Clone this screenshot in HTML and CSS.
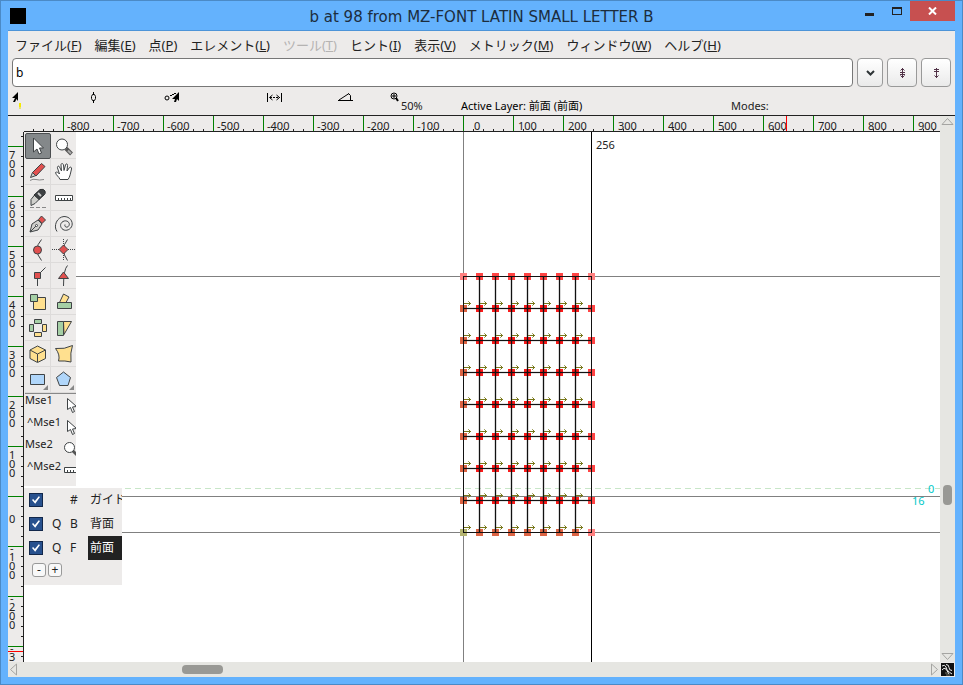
FILE: index.html
```html
<!DOCTYPE html>
<html lang="ja">

<head>
    <meta charset="utf-8">
    <title>b at 98 from MZ-FONT LATIN SMALL LETTER B</title>
    <link rel="stylesheet" href="styles.css">
</head>

<body>
    <header class="titlebar">
        <span class="app-icon"></span>
        <h1>b at 98 from MZ-FONT LATIN SMALL LETTER B</h1>
        <div class="window-buttons">
            <button class="win-btn" aria-label="Minimize"><svg width="10" height="10"><path d="M0 7h9v3h-9z" fill="#222"/></svg></button>
            <button class="win-btn" aria-label="Maximize"><svg width="10" height="8"><path d="M0 0h10v8H0zM1 2v5h8V2z" fill="#222" fill-rule="evenodd"/></svg></button>
            <button class="win-btn close" aria-label="Close"><svg width="9" height="8"><path d="M1 0.5l7 7M8 0.5l-7 7" stroke="#fff" stroke-width="2"/></svg></button>
        </div>
    </header>

    <main class="window">
        <nav class="menubar">
            <button>ファイル(<u>F</u>)</button>
            <button>編集(<u>E</u>)</button>
            <button>点(<u>P</u>)</button>
            <button>エレメント(<u>L</u>)</button>
            <button disabled>ツール(<u>T</u>)</button>
            <button>ヒント(<u>I</u>)</button>
            <button>表示(<u>V</u>)</button>
            <button>メトリック(<u>M</u>)</button>
            <button>ウィンドウ(<u>W</u>)</button>
            <button>ヘルプ(<u>H</u>)</button>
        </nav>

        <div class="word-row">
            <input type="text" class="word" value="b" aria-label="Glyph">
            <button class="word-btn drop" aria-label="History"><svg width="9" height="6"><path d="M1 1l3.5 3.5L8 1" fill="none" stroke="#2e3436" stroke-width="2"/></svg></button>
            <button class="word-btn" aria-label="Previous"><svg width="7" height="10"><path d="M3.5 0v10M1.5 2.5l2-2 2 2M1 4.5h5M1 6.5h5M1.5 7.5l2 2 2-2" fill="none" stroke="#513247"/></svg></button>
            <button class="word-btn" aria-label="Next"><svg width="7" height="10"><path d="M3.5 0v10M1 1.5h5M1 3.5h5M1.5 7.5l2 2 2-2" fill="none" stroke="#513247"/></svg></button>
        </div>

        <div class="infobar">
            <span class="info"><svg width="10" height="18"><path d="M6 0v9L4.500 7 3 10H1l2-4H0z" fill="#000"/><path d="M8 11v4" stroke="#f5ea00" stroke-width="2"/><path d="M7 16h2" stroke="#e5d800"/></svg></span>
            <span class="info"><svg width="7" height="11"><path d="M3.5 0v3M3.5 8v3M2.5 2.500h2l1 2v2l-1 2h-2l-1-2v-2z" fill="none" stroke="#000"/></svg></span>
            <span class="info"><svg width="17" height="11"><circle cx="3" cy="6" r="2" fill="none" stroke="#000"/><path d="M6 3.500h2M8 2.500h2M10 1.500h2" stroke="#000"/><path d="M15 0v9l-2-2-1 3h-2l1-3H8z" fill="#000"/></svg></span>
            <span class="info"><svg width="16" height="11"><path d="M.5 1v9M14.500 1v9" stroke="#000"/><path d="M3 5.500h10" stroke="#000" stroke-dasharray="2 1"/><path d="M5.500 3l-3 2.500 3 2.500M9.500 3l3 2.500-3 2.500" fill="none" stroke="#000"/></svg></span>
            <span class="info"><svg width="16" height="11"><path d="M0 8.500h15M1 8L11 1.500M10.500 1.500l2 2v5" fill="none" stroke="#000"/></svg></span>
            <span class="info"><svg width="10" height="11"><circle cx="4" cy="4" r="3" fill="none" stroke="#000"/><path d="M2 4h4M4 2v4" stroke="#000"/><path d="M6 6l2 3" stroke="#000" stroke-width="2"/></svg></span>
            <span class="info-text">50%</span>
            <span class="info-text active-layer">Active Layer: 前面 (前面)</span>
            <span class="info-text">Modes:</span>
        </div>

        <section class="editor">
            <svg class="ruler-top" id="rulerTop"></svg>
            <svg class="ruler-left" id="rulerLeft"></svg>
            <div class="view">
                <svg class="glyph" id="glyph"></svg>

                <aside class="palette tools">
                    <div class="tool-grid">
                        <button class="tool selected" aria-label="Pointer"><svg viewBox="0 0 26 26"><path class="white" d="M8.500 5v14l3.500-3 2 5 2.500-1-2-5h4z"/></svg></button>
                        <button class="tool" aria-label="Magnify"><svg viewBox="0 0 26 26"><path d="M15 15.500l5.500 5.500" stroke="#555" stroke-width="4"/><path d="M17 17.500l3 3" stroke="#aaa" stroke-width="2"/><circle class="white" cx="11" cy="11.500" r="5.500"/></svg></button>
                        <button class="tool" aria-label="Freehand"><svg viewBox="0 0 26 26"><path class="gray" d="M5.500 18.500l2-5 3.500 3z"/><path class="red" d="M7.500 13.500l9-9 3.500 3-9 9.500z"/><path class="thin" d="M5 21.500q3-2 6-1t8 0"/></svg></button>
                        <button class="tool" aria-label="Hand"><svg viewBox="0 0 26 26"><path class="white" d="M9 20.500c-1-3-4-4-4.500-7 1-1 3 0 4 1.500L6.500 9c-.5-2 1.500-2.500 2-1l2 4-.5-6c0-2 2-2 2.500 0l.5 5.500L14.500 6c.5-2 2.500-1 2 .5L16 12l2.500-3.500c1-1 2.500 0 2 1.500C19.500 14 19 18 17 20.500z"/></svg></button>
                        <button class="tool" aria-label="Knife"><svg viewBox="0 0 26 26"><path class="gray" d="M6 20.500v-6l4-5 5 4-5 5z"/><path d="M9 10l6-5.500q4-1 5 1.500T19 10l-5 4.500z" fill="#3e4143" stroke="#2e3132"/><path d="M13 8l3 3" stroke="#ccc" stroke-width="2"/><path class="thin" d="M5 22.500h16" stroke-dasharray="4 2"/></svg></button>
                        <button class="tool" aria-label="Ruler"><svg viewBox="0 0 26 26"><path class="white" d="M4.500 10.500h17v5h-17z"/><path class="line" d="M7.500 15v-2M10.500 15v-2M13.500 15v-2M16.500 15v-2M19.500 15v-2"/></svg></button>
                        <button class="tool" aria-label="Pen"><svg viewBox="0 0 26 26"><path class="gray" d="M5 21l2-8 6-4 4 4-4 6z"/><path class="line" d="M5 21l6-6"/><circle class="white" cx="11.500" cy="14.500" r="1"/><path class="red" d="M13.500 8.500L16.500 5l4 4-3.500 3.500z"/></svg></button>
                        <button class="tool" aria-label="Spiral"><svg viewBox="0 0 26 26"><path class="line" d="M6 20.500C2 15 6 6 13 5.500c6 0 9 5 8 9s-6 6-9 4-3.500-6 0-8 7.500 1 6 4-5 1.500-4-1"/></svg></button>
                        <button class="tool" aria-label="Curve point"><svg viewBox="0 0 26 26"><path class="line" d="M16.500 2.500q-9 10 0 21"/><circle class="red" cx="12.500" cy="13" r="4"/></svg></button>
                        <button class="tool" aria-label="HV curve point"><svg viewBox="0 0 26 26"><path class="line" d="M1 12.500h24M12.500 2v21" stroke-dasharray="1 1"/><path class="line" d="M16.500 2.500q-8 10 0 21"/><path class="red" d="M12.500 8l4.500 4.500-4.500 4.500L8 12.500z"/></svg></button>
                        <button class="tool" aria-label="Corner point"><svg viewBox="0 0 26 26"><path class="line" d="M20.500 4.500l-8 8v10.500"/><path class="red" d="M9.500 9.500h6v6h-6z"/></svg></button>
                        <button class="tool" aria-label="Tangent point"><svg viewBox="0 0 26 26"><path class="line" d="M16.500 2.500q-4 4-4 20.500"/><path class="red" d="M12.500 9l5 6.500h-10z"/></svg></button>
                        <button class="tool" aria-label="Scale"><svg viewBox="0 0 26 26"><path class="yellow" d="M8.500 8.500h12v12h-12z"/><path class="green" d="M5.500 5.500h7v7h-7z"/></svg></button>
                        <button class="tool" aria-label="Rotate"><svg viewBox="0 0 26 26"><path class="yellow" d="M8.500 13.500l4-8.500 5.500 3-3 5.500z"/><path class="green" d="M6.500 13.500h14v6h-14z"/></svg></button>
                        <button class="tool" aria-label="Flip"><svg viewBox="0 0 26 26"><path class="green" d="M9.500 4.500h7v4h-7zM4.500 9.500h4v7h-4z"/><path class="yellow" d="M17.500 9.500h4v7h-4zM9.500 17.500h7v4h-7z"/></svg></button>
                        <button class="tool" aria-label="Skew"><svg viewBox="0 0 26 26"><path class="yellow" d="M12.500 6.500h8l-7.500 13z"/><path class="green" d="M6.500 6.500h6v14h-6z"/></svg></button>
                        <button class="tool" aria-label="Rotate 3D"><svg viewBox="0 0 26 26"><path class="yellow" d="M12.500 5l8 4v8.500l-8 4-7.500-4V9z"/><path class="line" d="M5 9l7.500 4 8-4M12.500 13v8"/></svg></button>
                        <button class="tool" aria-label="Perspective"><svg viewBox="0 0 26 26"><path class="yellow" d="M4.500 7.500q9 1 17-3-2.500 7-1.500 16.500-6-1.500-12.500-1 2-6-3-12.500z"/></svg></button>
                        <button class="tool" aria-label="Rectangle"><svg viewBox="0 0 26 26"><path class="blue" d="M5.500 7.500h14v10h-14z"/><path d="M23 18v5h-5z" fill="#888"/></svg></button>
                        <button class="tool" aria-label="Polygon"><svg viewBox="0 0 26 26"><path class="blue" d="M12.500 5l7 5.500-2.500 8H8.500l-3-8z"/><path d="M23 18v5h-5z" fill="#888"/></svg></button>
                    </div>
                    <ul class="mouse">
                        <li><span>Mse1</span><svg viewBox="0 0 12 16"><path class="white" d="M3.500 1.500v11l3-2 2 5 2-1-2-4.500 4-.5z"/></svg></li>
                        <li><span class="ctrl">^Mse1</span><svg viewBox="0 0 12 16"><path class="white" d="M3.500 1.500v11l3-2 2 5 2-1-2-4.500 4-.5z"/></svg></li>
                        <li><span>Mse2</span><svg viewBox="0 0 12 16"><path d="M9 10l5 5" stroke="#555" stroke-width="3"/><circle class="white" cx="5.500" cy="6.500" r="5"/></svg></li>
                        <li><span class="ctrl">^Mse2</span><svg viewBox="0 0 12 16"><path class="white" d="M.5 4.500h16v5H.5z"/><path class="line" d="M3.500 9v-2M6.500 9v-2M9.500 9v-2"/></svg></li>
                    </ul>
                </aside>

                <aside class="palette layers">
                    <div class="layer">
                        <input type="checkbox" id="layerGuide" checked>
                        <span></span><span>#</span>
                        <label for="layerGuide">ガイド</label>
                    </div>
                    <div class="layer">
                        <input type="checkbox" id="layerBack" checked>
                        <span>Q</span><span>B</span>
                        <label for="layerBack">背面</label>
                    </div>
                    <div class="layer current">
                        <input type="checkbox" id="layerFore" checked>
                        <span>Q</span><span>F</span>
                        <label for="layerFore">前面</label>
                    </div>
                    <div class="layer-buttons">
                        <button aria-label="Remove layer">-</button>
                        <button aria-label="Add layer">+</button>
                    </div>
                </aside>
            </div>

            <div class="scroll vertical">
                <svg width="15" height="10"><path d="M2 8.500h11L7.500 2.500z"/></svg>
                <div class="track"><span class="space-before"></span><span class="thumb"></span><span class="space-after"></span></div>
                <svg width="15" height="10"><path d="M2 1.500h11L7.500 7.500z"/></svg>
            </div>
            <div class="scroll horizontal">
                <svg width="10" height="15"><path d="M8.500 2v11L2.500 7.500z"/></svg>
                <div class="track"><span class="space-before"></span><span class="thumb"></span><span class="space-after"></span></div>
                <svg width="10" height="15"><path d="M1.500 2v11l6-5.500z"/></svg>
            </div>
            <div class="corner"><svg width="13" height="13"><path d="M1 3q3-2 4 1t2 4 4 3M5 1.500q3 0 3 3t3 3M1 7q2-3 4-1l3 5" fill="none" stroke="#eee"/><path d="M4 10h3M5 12h4" stroke="#776"/></svg></div>
        </section>
    </main>

    <script src="script.js"></script>
</body>

</html>
```

FILE: styles.css
```css
* {
    box-sizing: border-box;
}

body {
    display: flex;
    flex-direction: column;
    height: 100vh;
    margin: 0;
    padding: 0 7px 7px;
    border: 1px solid #4b8ac6;
    background-color: #64b2fd;
    font-family: "Noto Sans", "Noto Sans CJK JP", sans-serif;
    font-size: 11px;
    color: #222;
    overflow: hidden;
}

button {
    margin: 0;
    padding: 0;
    border: none;
    background: none;
    font: inherit;
    color: inherit;
}

svg {
    display: block;
}

/* title bar */
.titlebar {
    display: grid;
    grid-template-columns: 100px 1fr 100px;
    align-items: center;
    height: 29px;
    flex: none;
}

.app-icon {
    width: 16px;
    height: 16px;
    margin-left: 2px;
    background-color: #000;
}

h1 {
    margin: 0;
    padding-top: 2px;
    text-align: center;
    font-family: "DejaVu Sans", sans-serif;
    font-size: 15px;
    font-weight: normal;
    color: #1c2d3d;
    white-space: nowrap;
}

.window-buttons {
    display: flex;
    justify-content: flex-end;
    align-self: start;
}

.win-btn {
    display: flex;
    align-items: center;
    justify-content: center;
    width: 27px;
    height: 20px;
}

.win-btn.close {
    width: 45px;
    background-color: #c75050;
}

.window {
    display: flex;
    flex-direction: column;
    flex: 1;
    min-height: 0;
    border-top: 1px solid #4d94d8;
    background-color: #edebea;
}

/* menu */
.menubar {
    display: flex;
    gap: 13px;
    height: 27px;
    padding: 0 7px;
    font-size: 13px;
    line-height: 26px;
    white-space: nowrap;
}

.menubar button:disabled {
    color: #b5b3b2;
}

.word-row {
    display: flex;
    gap: 4px;
    height: 29px;
    padding: 0 4px;
}

.word {
    flex: 1;
    min-width: 0;
    padding: 0 3px;
    border: 1px solid #777;
    border-radius: 4px;
    background-color: #fff;
    font: inherit;
    font-size: 12px;
}

.word-btn {
    display: flex;
    align-items: center;
    justify-content: center;
    width: 30px;
    border: 1px solid #999;
    border-radius: 4px;
    background: linear-gradient(#fff, #eaeaea);
}

.word-btn.drop {
    width: 26px;
}

/* info line */
.infobar {
    display: grid;
    grid-template-columns: 78px 74px 103px 71px 52px 11px 60px 270px 1fr;
    height: 29px;
    padding: 5px 0 0 4px;
    border-bottom: 1px solid #222;
    white-space: nowrap;
}

.info-text {
    padding-top: 6px;
    line-height: 16px;
}

.active-layer {
    color: #000;
}

/* editor */
.editor {
    display: grid;
    grid-template-columns: 16px 1fr 15px;
    grid-template-rows: 16px 1fr 15px;
    flex: 1;
    min-height: 0;
}

.ruler-top {
    grid-area: 1 / 1 / 2 / 3;
    width: 100%;
    height: 100%;
}

.ruler-left {
    grid-area: 2 / 1 / 3 / 2;
    width: 100%;
    height: 100%;
}

.view {
    grid-area: 2 / 2 / 3 / 3;
    position: relative;
    min-height: 0;
    background-color: #fff;
    overflow: hidden;
}

.glyph {
    width: 100%;
    height: 100%;
}

.ruler-top text,
.ruler-left text,
.glyph text {
    font-size: 11px;
    fill: #222;
}

.glyph .metric {
    fill: #00c8c8;
}

/* palettes float over the glyph */
.palette {
    position: absolute;
    left: 0;
    background-color: #edebea;
    overflow: hidden;
}

.tools {
    top: 0;
    width: 52px;
    height: 354px;
    padding: 1px 0 0 1px;
}

.tool-grid {
    display: grid;
    grid-template-columns: 26px 26px;
}

.tool {
    height: 26px;
    border-right: 1px solid #dddbda;
    border-bottom: 1px solid #dddbda;
}

.tool svg {
    width: 26px;
    height: 26px;
}

.tool.selected {
    border: 1px solid #4b4e50;
    border-radius: 2px;
    background-color: #84888a;
}

.tool.selected svg {
    margin: -1px;
}

.palette path,
.palette circle {
    stroke-linejoin: round;
}

.white { fill: #fff; stroke: #3f4345; }
.gray { fill: #d0d0cc; stroke: #3f4345; }
.red { fill: #e2504f; stroke: #3f4345; }
.green { fill: #a5cfa5; stroke: #3f4345; }
.yellow { fill: #ffe08f; stroke: #3f4345; }
.blue { fill: #b0d6fa; stroke: #3f4345; }
.line { fill: none; stroke: #3f4345; }
.thin { fill: none; stroke: #888; }

.mouse {
    margin: 0;
    padding: 0;
    list-style: none;
    border-top: 1px solid #888;
}

.mouse li {
    display: flex;
    justify-content: space-between;
    height: 22px;
    line-height: 12px;
}

.mouse .ctrl {
    padding-left: 2px;
}

.mouse svg {
    flex: none;
    width: 12px;
    height: 16px;
    margin-top: 3px;
}

.layers {
    top: 356px;
    width: 98px;
    height: 97px;
    font-size: 12px;
}

.layer {
    display: grid;
    grid-template-columns: 23px 18px 18px 34px;
    align-items: center;
    height: 24px;
    padding-left: 5px;
    line-height: 24px;
    white-space: nowrap;
}

.layer label {
    padding-left: 2px;
    overflow: hidden;
}

.layer.current label {
    background-color: #222;
    color: #fff;
}

.layer input {
    display: grid;
    place-items: center;
    appearance: none;
    width: 14px;
    height: 14px;
    margin: 0;
    border: 1px solid #12274a;
    background-color: #28518e;
}

.layer input:checked::before {
    content: "";
    width: 8px;
    height: 8px;
    background-color: #fff;
    clip-path: polygon(0 50%, 14% 38%, 36% 62%, 84% 4%, 100% 14%, 40% 98%);
}

.layer-buttons {
    display: flex;
    gap: 2px;
    padding: 3px 8px;
}

.layer-buttons button {
    width: 14px;
    height: 14px;
    border: 1px solid #999;
    border-radius: 3px;
    background-color: #f8f8f8;
    line-height: 12px;
}

/* scroll bars */
.scroll {
    display: flex;
    background-color: #e6e6e2;
}

.scroll svg {
    flex: none;
    fill: none;
    stroke: #a5a5a2;
}

.scroll.vertical {
    grid-area: 1 / 3 / 3 / 4;
    flex-direction: column;
}

.scroll.horizontal {
    grid-area: 3 / 1 / 4 / 3;
}

.track {
    display: flex;
    flex: 1;
    padding: 3px 0;
}

.vertical .track {
    flex-direction: column;
    padding: 0 3px;
}

.thumb {
    flex: none;
    width: 41px;
    border-radius: 4px;
    background-color: #999995;
}

.vertical .thumb {
    width: auto;
    height: 20px;
}

.horizontal .space-before { flex: 164; }
.horizontal .space-after { flex: 707; }
.vertical .space-before { flex: 359; }
.vertical .space-after { flex: 147; }

.corner {
    grid-area: 3 / 3 / 4 / 4;
    background-color: #111;
    border: 1px solid #edebea;
}
```

FILE: script.js
```js
const SVG = 'http://www.w3.org/2000/svg';

function add(parent, tag, attrs, text) {
    const el = document.createElementNS(SVG, tag);
    for (const key in attrs) {
        el.setAttribute(key, attrs[key]);
    }
    if (text !== undefined) {
        el.textContent = text;
    }
    parent.appendChild(el);
}

function rect(parent, x, y, width, height, fill) {
    add(parent, 'rect', { x, y, width, height, fill });
}

// 50% zoom: 100 units are 50px
function drawTopRuler() {
    const ruler = document.getElementById('rulerTop');
    const width = ruler.getBoundingClientRect().width;
    const zero = 455;
    ruler.replaceChildren();
    for (let x = 25; x < width; x += 10) {
        rect(ruler, x, 13, 1, 2, '#222');
    }
    for (let unit = -800; zero + unit / 2 < width; unit += 100) {
        const x = zero + unit / 2;
        rect(ruler, x, 0, 1, 15, '#008000');
        if (x + 26 < width) {
            add(ruler, 'text', { x: x + (unit === 0 ? 11 : unit < 0 ? 4 : 5), y: 14 }, unit);
        }
    }
    rect(ruler, 778, 0, 1, 15, '#f00');
    rect(ruler, 16, 15, '100%', 1, '#222');
}

function drawLeftRuler() {
    const ruler = document.getElementById('rulerLeft');
    const height = ruler.getBoundingClientRect().height;
    const zero = 364;
    ruler.replaceChildren();
    for (let y = 4; y < height; y += 10) {
        rect(ruler, 13, y, 2, 1, '#222');
    }
    for (let unit = 700; zero - unit / 2 < height; unit -= 100) {
        const y = zero - unit / 2;
        rect(ruler, 0, y, 15, 1, '#008000');
        let base = unit === 0 ? y + 27 : y + 13;
        if (unit < 0) {
            add(ruler, 'text', { x: 2, y: y + 6 }, '-');
            base = y + 15;
        }
        for (const digit of String(Math.abs(unit))) {
            if (base < height) {
                add(ruler, 'text', { x: 1, y: base }, digit);
            }
            base += 9;
        }
    }
    rect(ruler, 0, 519, 15, 1, '#f00');
    rect(ruler, 15, 0, 1, '100%', '#222');
}

function nodeColor(col, row) {
    if (row === 0) {
        return col === 0 || col === 8 ? '#ff8080' : '#ff4444';
    }
    if (row === 8) {
        return col === 0 ? '#b4b470' : col === 8 ? '#ff8080' : '#dc6444';
    }
    return col === 0 ? '#dc6444' : col === 8 ? '#ff4444' : '#f91a1a';
}

function drawGlyph() {
    const view = document.getElementById('glyph');
    const left = 439, top = 144, size = 8;

    // guide lines
    for (const y of [144, 364, 400]) {
        rect(view, 0, y, '100%', 1, '#808080');
    }
    add(view, 'path', { d: 'M101 356.5H2000', stroke: '#c8e6c8', 'stroke-dasharray': '6 4' });
    rect(view, left, 0, 1, '100%', '#808080');
    rect(view, left + 128, 0, 1, '100%', '#000');

    for (let row = 0; row <= size; row++) {
        for (let col = 0; col <= size; col++) {
            rect(view, left + col * 16 - 3, top + row * 32 - 3, 7, 7, nodeColor(col, row));
        }
    }

    // cell outlines
    for (let i = 0; i <= size; i++) {
        const x = left + i * 16, y = top + i * 32;
        if (i > 0 && i < size) {
            add(view, 'rect', { x: x - 1, y: top, width: 3, height: 256, fill: '#000', 'fill-opacity': 0.15 });
            add(view, 'rect', { x: left, y: y - 1, width: 128, height: 3, fill: '#000', 'fill-opacity': 0.1 });
        }
        rect(view, x, top, 1, 257, '#111');
        rect(view, left, y, 129, 1, '#111');
    }

    // start point directions
    for (let row = 1; row <= size; row++) {
        for (let col = 0; col < size; col++) {
            const x = left + col * 16 + 1, y = top + row * 32 - 5;
            rect(view, x, y, 7, 1, '#77771a');
            rect(view, x + 5, y - 1, 1, 3, '#77771a');
            rect(view, x + 4, y - 2, 1, 1, '#a5a566');
            rect(view, x + 4, y + 2, 1, 1, '#a5a566');
        }
    }

    add(view, 'text', { x: 572, y: 17 }, '256');
    add(view, 'text', { x: 904, y: 361, class: 'metric' }, '0');
    add(view, 'text', { x: 888, y: 373, class: 'metric' }, '16');
}

function drawRulers() {
    drawTopRuler();
    drawLeftRuler();
}

drawRulers();
drawGlyph();
window.addEventListener('resize', drawRulers);
```
